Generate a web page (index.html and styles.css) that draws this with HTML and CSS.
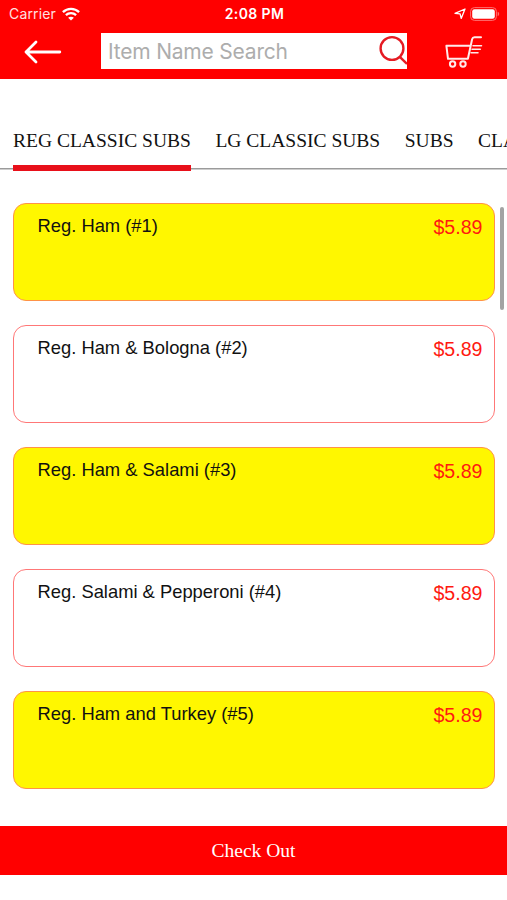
FILE: index.html
```html
<!DOCTYPE html>
<html lang="en">
<head>
  <meta charset="utf-8">
  <title>Menu</title>
  <link rel="stylesheet" href="styles.css">
</head>
<body>
  <header class="header">
    <div class="status-bar">
      <div class="carrier">
        <span>Carrier</span>
        <svg width="18" height="14" viewBox="0 0 18 14" fill="none" stroke="#fff" stroke-width="2.3">
          <path d="M0.9 5.1C5.4 0.7 12.6 0.7 17.1 5.1"/>
          <path d="M3.9 8.2C6.7 5.5 11.3 5.5 14.1 8.2"/>
          <path d="M9 13.6L6.1 10.7C7.7 9.3 10.3 9.3 11.9 10.7Z" fill="#fff" stroke="none"/>
        </svg>
      </div>
      <div class="clock">2:08 PM</div>
      <div class="status-icons">
        <svg width="12" height="12" viewBox="0 0 12 12" fill="none" stroke="#fff" stroke-width="1.3" stroke-linejoin="round">
          <path d="M11 1L7.2 10.4L6.1 5.9L1 5.4Z"/>
        </svg>
        <svg width="30" height="14" viewBox="0 0 30 14">
          <rect x="0.6" y="0.6" width="25.8" height="12.8" rx="3.8" fill="none" stroke="#ff7070" stroke-width="1"/>
          <rect x="2.2" y="2.2" width="22.6" height="9.6" rx="2.2" fill="#fff"/>
          <path d="M27.7 4.8Q29.2 5.4 29.2 7T27.7 9.2Z" fill="#ff7070"/>
        </svg>
      </div>
    </div>

    <div class="nav">
      <svg class="back" width="38" height="24" viewBox="0 0 38 24" fill="none" stroke="#fff" stroke-width="2.8" stroke-linecap="round" stroke-linejoin="round">
        <path d="M35.8 12H2M12 2L2 12L12 22"/>
      </svg>
      <div class="search">
        <input class="search-input" type="text" placeholder="Item Name Search">
        <svg class="search-icon" width="28" height="36" viewBox="0 0 28 36" fill="none" stroke="#e51b23" stroke-width="2.4">
          <circle cx="13" cy="15.5" r="11.4"/>
          <path d="M20.8 23.8L28 31"/>
        </svg>
      </div>
      <svg class="cart" width="38" height="32" viewBox="0 0 38 32" fill="none" stroke="#ffeaea" stroke-width="2" stroke-linecap="round" stroke-linejoin="round">
        <path d="M36 1.3H29.5Q27.6 1.3 27.1 3.2L22.9 22.8H3L1.4 9.8H25.2"/>
        <path d="M28 9.7H36.5M27 13.2H35.3M26 16.7H33" stroke-width="1.5"/>
        <circle cx="7.6" cy="28" r="2.7"/>
        <circle cx="18" cy="28" r="2.7"/>
      </svg>
    </div>
  </header>

  <nav class="tabs">
    <a class="tab active">REG CLASSIC SUBS</a>
    <a class="tab">LG CLASSIC SUBS</a>
    <a class="tab">SUBS</a>
    <a class="tab">CLASSIC SALADS</a>
  </nav>

  <main class="items">
    <div class="item yellow">
      <span class="name">Reg. Ham (#1)</span>
      <span class="price">$5.89</span>
    </div>
    <div class="item">
      <span class="name">Reg. Ham &amp; Bologna (#2)</span>
      <span class="price">$5.89</span>
    </div>
    <div class="item yellow">
      <span class="name">Reg. Ham &amp; Salami (#3)</span>
      <span class="price">$5.89</span>
    </div>
    <div class="item">
      <span class="name">Reg. Salami &amp; Pepperoni (#4)</span>
      <span class="price">$5.89</span>
    </div>
    <div class="item yellow">
      <span class="name">Reg. Ham and Turkey (#5)</span>
      <span class="price">$5.89</span>
    </div>
    <div class="scrollbar"></div>
  </main>

  <button class="checkout">Check Out</button>
</body>
</html>
```
FILE: styles.css
```css
* {
  box-sizing: border-box;
}
body {
  margin: 0;
  height: 900px;
  display: flex;
  flex-direction: column;
  overflow: hidden;
  background: #fff;
  font-family: "Liberation Serif", "Times New Roman", serif;
}
svg {
  display: block;
  flex: none;
}

/* Header */
.header {
  height: 79px;
  flex: none;
  background: #ff0000;
}
.status-bar {
  display: flex;
  align-items: center;
  height: 27px;
  padding: 0 7px 0 9px;
  color: #fff;
  font-family: Inter, "Liberation Sans", sans-serif;
  font-size: 14px;
}
.carrier,
.status-icons {
  flex: 1;
  display: flex;
  align-items: center;
}
.carrier {
  gap: 6px;
  color: #ffe0e0;
  letter-spacing: 0.15px;
}
.clock {
  font-size: 14px;
  font-weight: 600;
  letter-spacing: 0.4px;
}
.status-icons {
  justify-content: flex-end;
  gap: 4px;
}
.nav {
  display: flex;
  align-items: center;
  margin-top: 6px;
  height: 36px;
  padding: 0 24px 0 24px;
}
.back {
  margin-top: 2px;
}
.search {
  display: flex;
  width: 306px;
  height: 36px;
  margin-left: 39px;
  background: #fff;
}
.search-input {
  flex: 1;
  min-width: 0;
  padding: 0 0 0 7px;
  border: none;
  outline: none;
  background: none;
  font-family: Inter, "Liberation Sans", sans-serif;
  font-size: 21px;
  letter-spacing: -0.2px;
}
.search-input::placeholder {
  color: #adadad;
}
.cart {
  margin: 2px 0 0 38px;
}

/* Category tabs */
.tabs {
  display: flex;
  flex: none;
  gap: 24.5px;
  height: 92px;
  padding: 50px 0 0 13px;
  overflow: hidden;
  white-space: nowrap;
  background: linear-gradient(#9b9b9b, #9b9b9b) 0 89px / 100% 1.5px no-repeat;
}
.tab {
  flex: none;
  height: 42px;
  color: #111;
  font-size: 19.52px;
  line-height: 24px;
}
.tab.active {
  border-bottom: 6px solid #e8101a;
}

/* Menu items */
.items {
  position: relative;
  flex: 1;
  display: flex;
  flex-direction: column;
  gap: 24.2px;
  padding: 31.6px 12.5px 0 13px;
}
.item {
  display: flex;
  justify-content: space-between;
  flex: none;
  height: 98px;
  padding: 10px 11px 0 23.5px;
  border: 1px solid #f77;
  border-radius: 13px;
  font-family: "Liberation Sans", Arial, sans-serif;
}
.item.yellow {
  background: #fff700;
  border-color: #ff9248;
}
.name {
  color: #111;
  font-size: 18.37px;
  line-height: 24px;
}
.price {
  color: #ff1a10;
  font-size: 19.6px;
  line-height: 26px;
}
.scrollbar {
  position: absolute;
  top: 36px;
  right: 3px;
  width: 4px;
  height: 103px;
  border-radius: 2px;
  background: #a3a3a3;
}

/* Footer button */
.checkout {
  flex: none;
  height: 49px;
  margin-bottom: 24.6px;
  padding: 1px 0 0;
  border: none;
  background: #ff0000;
  color: #fff;
  font-family: inherit;
  font-size: 19.5px;
}
```
